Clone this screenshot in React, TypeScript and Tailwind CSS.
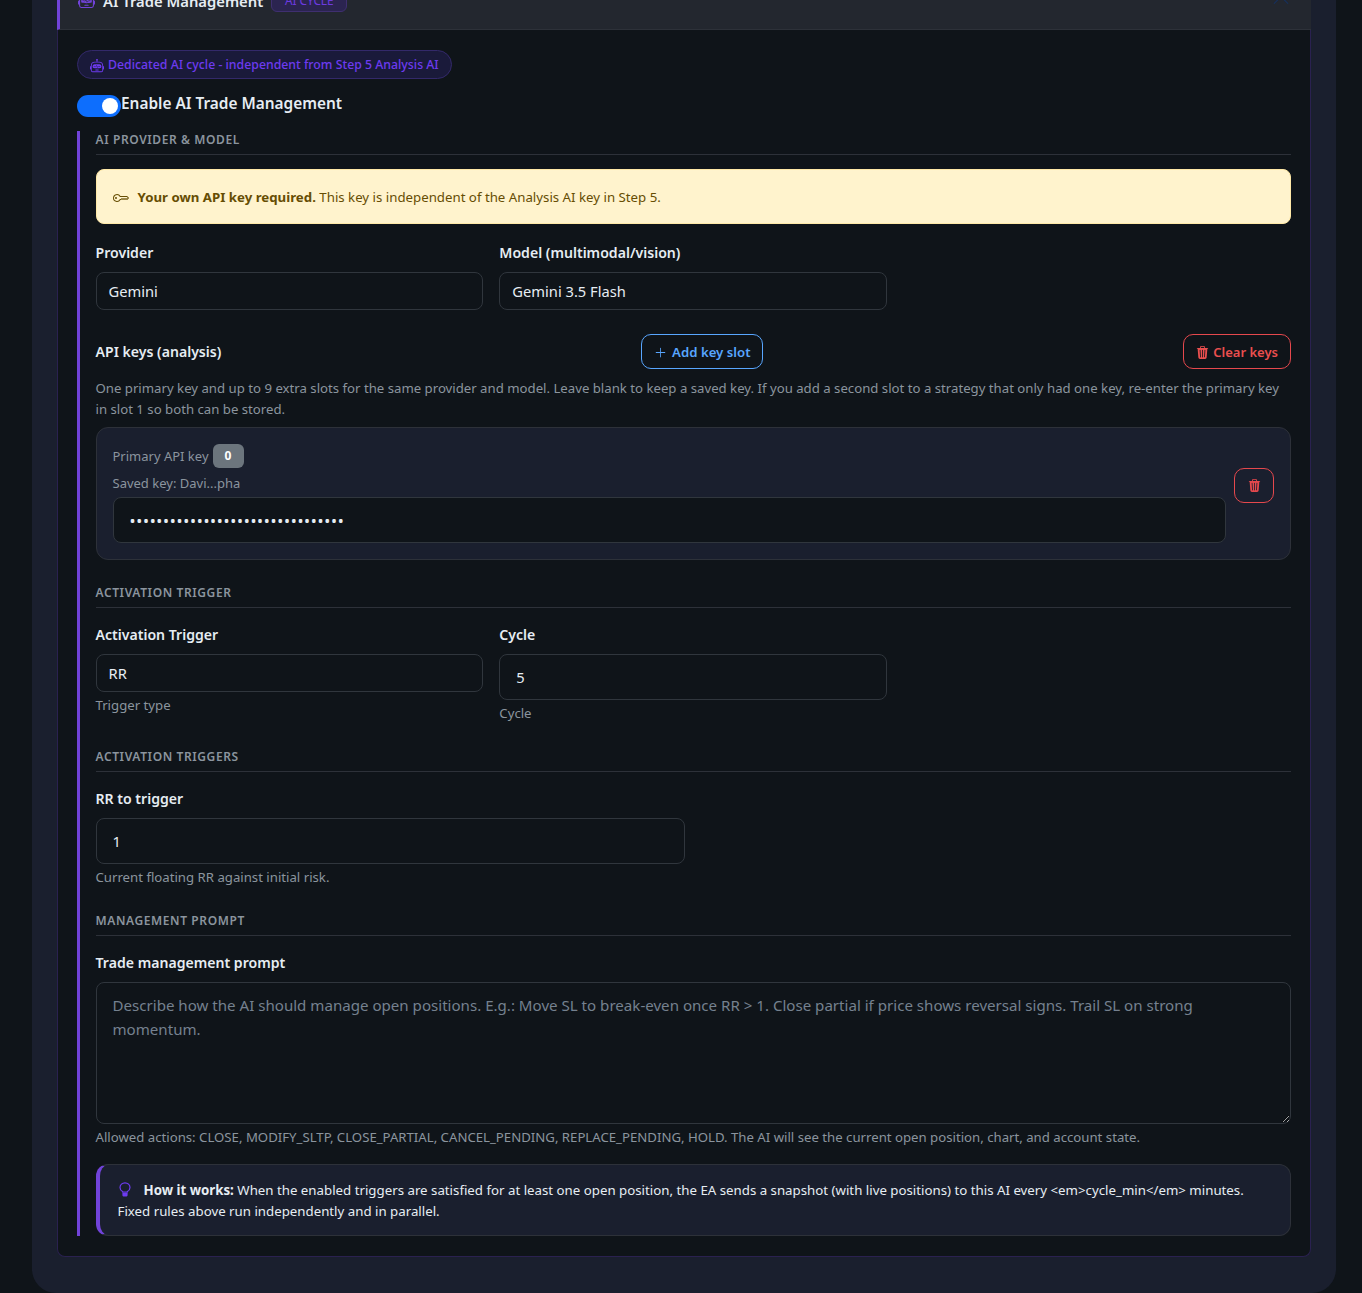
import { BsChevronUp, BsKey, BsPlusLg, BsRobot, BsTrash3Fill } from "react-icons/bs";

function SectionTitle({ children, className = "" }: { children: React.ReactNode; className?: string }) {
  return (
    <div className={`border-b border-[#2d3139] pb-[5px] text-[12px] leading-[18px] font-semibold tracking-[0.6px] text-[#8b949e] uppercase ${className}`}>
      {children}
    </div>
  );
}

function Label({ children }: { children: React.ReactNode }) {
  return <div className="mb-2 text-[14.1px] leading-[22px] font-semibold text-[#e6edf3]">{children}</div>;
}

function SelectBox({ value }: { value: string }) {
  return (
    <div className="flex h-[38px] items-center rounded-lg border border-[#30363d] bg-[#0f1419] px-3 pt-px text-[14.7px] text-[#e6edf3]">
      {value}
    </div>
  );
}

function NumberBox({ value }: { value: string }) {
  return (
    <div className="flex h-[46px] items-center rounded-lg border border-[#30363d] bg-[#0f1419] px-4 pt-px text-[14.7px] text-[#e6edf3]">
      {value}
    </div>
  );
}

function Help({ children }: { children: React.ReactNode }) {
  return <div className="text-[13.2px] leading-[21px] text-[#8b949e]">{children}</div>;
}

export default function App() {
  return (
    <div className="h-[1293px] overflow-hidden bg-[#0f1419] pr-[26px] pl-8 font-['Noto_Sans',sans-serif]">
      <div className="h-[1293px] rounded-b-[24px] bg-[#1a1f2e] px-[25px]">
        <div className="h-[1257px] rounded-b-lg border-x border-b border-[#2a2150] bg-[#0f1419]">
          {/* Card header, scrolled partly off the top */}
          <div className="-mx-px flex h-[30px] items-end justify-between border-b border-[#2d3139] border-l-[3px] border-l-[#7143d9] bg-[#23272f] pr-[21px] pb-[17px] pl-[18px]">
            <div className="flex h-6 items-center">
              <BsRobot className="text-[17px] text-[#7143d9]" />
              <span className="ml-2 pt-[2px] text-[14.8px] font-semibold text-[#e6edf3]">AI Trade Management</span>
              <span className="ml-2 flex h-6 w-[76px] items-center justify-center rounded-md border border-[#3f2f70] bg-[#2b2450] pt-px text-[11.8px] text-[#6d3be0]">AI CYCLE</span>
            </div>
            <div className="flex h-6 items-center">
              <BsChevronUp className="text-[18px] text-[#16305c]" />
            </div>
          </div>

          <div className="px-[19px] pt-5">
            <div className="flex h-[29px] w-fit items-center gap-1 rounded-full border border-[#33296a] bg-[#1a1a3a] px-3 pt-[2px] text-[12.3px] font-medium text-[#6d3bf0]">
              <BsRobot className="text-[14px]" />
              Dedicated AI cycle - independent from Step 5 Analysis AI
            </div>

            <div className="mt-4 flex h-[22px] items-start">
              <div className="flex h-[22px] w-[44px] items-center justify-end rounded-full bg-[#0d6efd] pr-[3px]">
                <div className="h-4 w-4 rounded-full bg-white" />
              </div>
              <span className="-mt-[2px] text-[15.4px] leading-[22px] font-semibold text-[#e6edf3]">Enable AI Trade Management</span>
            </div>

            <div className="mt-[14px] border-l-[3px] border-[#7143d9] pl-[15.5px]">
              <SectionTitle>AI Provider &amp; Model</SectionTitle>

              <div className="mt-[14px] flex h-[55px] items-center gap-[9px] rounded-lg border border-[#ffe9a8] bg-[#fff3cd] px-4 pt-[2px] text-[13.25px] text-[#664d03]">
                <BsKey className="text-[16px]" />
                <span>
                  <b className="font-bold">Your own API key required.</b> This key is independent of the Analysis AI key in Step 5.
                </span>
              </div>

              <div className="mt-[18px] grid grid-cols-3 gap-4">
                <div>
                  <Label>Provider</Label>
                  <SelectBox value="Gemini" />
                </div>
                <div>
                  <Label>Model (multimodal/vision)</Label>
                  <SelectBox value="Gemini 3.5 Flash" />
                </div>
              </div>

              <div className="mt-6 flex items-center justify-between">
                <span className="text-[14.1px] font-semibold text-[#e6edf3]">API keys (analysis)</span>
                <button className="flex h-[35px] items-center gap-[5px] rounded-[10px] border border-[#58a6ff] px-3 pt-[2px] text-[13.2px] font-semibold text-[#58a6ff]">
                  <BsPlusLg className="text-[13px]" />
                  Add key slot
                </button>
                <button className="flex h-[35px] items-center gap-[4px] rounded-[10px] border border-[#e5484d] px-3 pt-[2px] text-[13px] font-semibold text-[#ea4f4f]">
                  <BsTrash3Fill className="text-[13px]" />
                  Clear keys
                </button>
              </div>

              <div className="mt-[9px]">
                <Help>
                  One primary key and up to 9 extra slots for the same provider and model. Leave blank to keep a saved key. If you add a second slot to a strategy that only had one key, re-enter the primary key in slot 1 so both can be stored.
                </Help>
              </div>

              <div className="mt-[7px] flex h-[133px] items-center gap-2 rounded-xl border border-[#2d3139] bg-[#1a1f2e] px-4">
                <div className="flex-1 pb-px">
                  <div className="flex items-center gap-1 text-[13px] text-[#8b949e]">
                    <span className="pt-[3px]">Primary API key</span>
                    <span className="flex h-6 w-[31px] items-center justify-center rounded-md bg-[#6c757d] text-[12px] font-bold text-white">0</span>
                  </div>
                  <div className="mt-[5px] text-[13px] leading-[20px] text-[#8b949e]">Saved key: Davi...pha</div>
                  <div className="mt-1 flex h-[46px] items-center rounded-lg border border-[#30363d] bg-[#0f1419] px-4 pt-[2px] text-[16px] tracking-[0.7px] text-[#e6edf3]">
                    ••••••••••••••••••••••••••••••••
                  </div>
                </div>
                <button className="mb-[17px] flex h-[35px] w-[40px] shrink-0 items-center justify-center rounded-[10px] border border-[#e5484d] text-[13px] text-[#e5484d]">
                  <BsTrash3Fill />
                </button>
              </div>

              <SectionTitle className="mt-6">Activation Trigger</SectionTitle>

              <div className="mt-[16px] grid grid-cols-3 gap-4">
                <div>
                  <Label>Activation Trigger</Label>
                  <SelectBox value="RR" />
                  <div className="mt-[3px]">
                    <Help>Trigger type</Help>
                  </div>
                </div>
                <div>
                  <Label>Cycle</Label>
                  <NumberBox value="5" />
                  <div className="mt-[3px]">
                    <Help>Cycle</Help>
                  </div>
                </div>
              </div>

              <SectionTitle className="mt-6">Activation Triggers</SectionTitle>

              <div className="mt-[16px] grid grid-cols-2 gap-4">
                <div>
                  <Label>RR to trigger</Label>
                  <NumberBox value="1" />
                  <div className="mt-[3px]">
                    <Help>Current floating RR against initial risk.</Help>
                  </div>
                </div>
              </div>

              <SectionTitle className="mt-6">Management Prompt</SectionTitle>

              <div className="mt-[16px]">
                <Label>Trade management prompt</Label>
                <textarea
                  readOnly
                  placeholder="Describe how the AI should manage open positions. E.g.: Move SL to break-even once RR > 1. Close partial if price shows reversal signs. Trail SL on strong momentum."
                  className="block h-[142px] w-full rounded-lg border border-[#30363d] bg-[#0f1419] px-4 py-[10px] text-[15.1px] leading-6 text-[#e6edf3] outline-none placeholder:text-[#75818f]"
                />
                <div className="mt-[3px]">
                  <Help>Allowed actions: CLOSE, MODIFY_SLTP, CLOSE_PARTIAL, CANCEL_PENDING, REPLACE_PENDING, HOLD. The AI will see the current open position, chart, and account state.</Help>
                </div>
              </div>

              <div className="mt-4 h-[72px] rounded-xl border border-[#2d3139] border-l-4 border-l-[#7143d9] bg-[#1a1f2e] px-[18px] py-[15px] text-[13.28px] leading-[21px] text-[#e6edf3]">
                <svg viewBox="0 0 12 15" className="mr-[13px] ml-px inline-block h-[15px] w-3 align-[-2px] text-[#6d3bf0]">
                  <path d="M3.6 9.6C2 8.6 1 7.2 1 5.4a5 4.6 0 0 1 10 0c0 1.8-1 3.2-2.6 4.2V10H3.6z" fill="none" stroke="currentColor" strokeWidth="1.2" />
                  <path d="M3.4 10.5h5.2v2.4c0 1-.8 1.6-1.6 1.6H5c-.8 0-1.6-.6-1.6-1.6z" fill="currentColor" />
                </svg>
                <b className="font-bold">How it works:</b> When the enabled triggers are satisfied for at least one open position, the EA sends a snapshot (with live positions) to this AI every &lt;em&gt;cycle_min&lt;/em&gt; minutes. Fixed rules above run independently and in parallel.
              </div>
            </div>
          </div>
        </div>
      </div>
    </div>
  );
}
